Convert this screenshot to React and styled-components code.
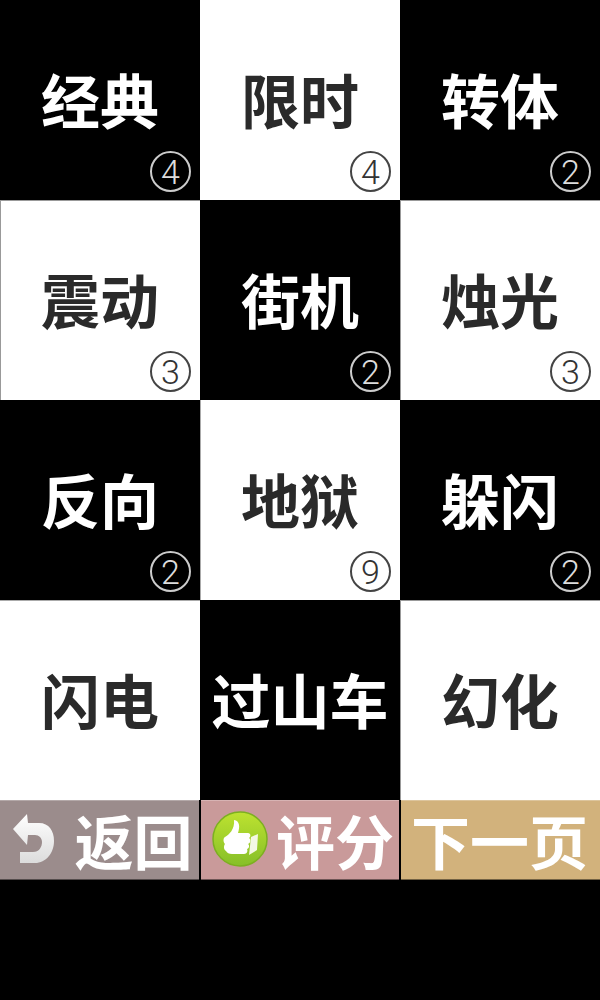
import React from 'react';
import styled, { createGlobalStyle } from 'styled-components';

const GlobalStyle = createGlobalStyle`
    html, body {
        margin: 0;
        padding: 0;
        background: #000;
    }
`;

const Page = styled.div`
    width: 600px;
    height: 1000px;
    background: #000;
    overflow: hidden;
    font-family: "Noto Sans CJK SC", "Liberation Sans", sans-serif;
`;

const Board = styled.div`
    display: grid;
    grid-template-columns: repeat(3, 200px);
    grid-auto-rows: 200px;
`;

const edges = {
    both: 'inset 1px 1px 0 #999',
    top: 'inset 0 1px 0 #aaa',
    left: 'inset 1px 0 0 #aaa',
};

const Tile = styled.div`
    position: relative;
    display: flex;
    align-items: center;
    justify-content: center;
    box-sizing: border-box;
    padding-bottom: 3px;
    background: ${({ $dark }) => ($dark ? '#000' : '#fff')};
    color: ${({ $dark }) => ($dark ? '#fff' : '#2a2a2a')};
    font-size: 59px;
    font-weight: 700;
    line-height: 1;
    white-space: nowrap;
    box-shadow: ${({ $edge }) => edges[$edge] || 'none'};
`;

const Badge = styled.span`
    position: absolute;
    right: 9px;
    bottom: 8px;
    width: 37px;
    height: 37px;
    display: flex;
    align-items: center;
    justify-content: center;
    border: 2px solid ${({ $dark }) => ($dark ? '#ccc' : '#444')};
    border-radius: 50%;
    color: ${({ $dark }) => ($dark ? '#ddd' : '#333')};
    font-family: "Roboto", "Liberation Sans", sans-serif;
    font-size: 34px;
    font-weight: 300;
    line-height: 1;
`;

const Toolbar = styled.div`
    display: grid;
    grid-template-columns: 199px 198px 199px;
    column-gap: 2px;
    height: 80px;
`;

const ToolButton = styled.button`
    display: flex;
    align-items: center;
    justify-content: center;
    gap: ${({ $gap }) => $gap || 0}px;
    box-sizing: border-box;
    height: 80px;
    margin: 0;
    padding: ${({ $pad }) => $pad || '0 0 2px'};
    border: none;
    border-top: 1px solid rgba(255, 255, 255, 0.25);
    border-bottom: 1px solid rgba(0, 0, 0, 0.45);
    background: ${({ $color }) => $color};
    color: #fff;
    font-family: inherit;
    font-size: 59px;
    font-weight: 700;
    line-height: 1;
    white-space: nowrap;
`;

const BackIcon = () => (
    <svg width="42" height="50" viewBox="0 0 42 50">
        <defs>
            <linearGradient id="backFill" x1="0" y1="0" x2="0" y2="1">
                <stop offset="0" stopColor="#fff" />
                <stop offset="1" stopColor="#dcdcdc" />
            </linearGradient>
        </defs>
        <path d="M0 15 L14 0 L15 9 H26 C36 9 41 17 41 27 C41 39 33 49 22 49 H7 V38 H20 C26 38 29 33 29 28 C29 24 26 21 22 21 H15 L14 31 Z" fill="url(#backFill)" />
    </svg>
);

const ThumbIcon = () => (
    <svg width="56" height="56" viewBox="0 0 56 56">
        <defs>
            <linearGradient id="thumbFill" x1="0" y1="0" x2="0" y2="1">
                <stop offset="0" stopColor="#bde230" />
                <stop offset="1" stopColor="#86bf28" />
            </linearGradient>
        </defs>
        <circle cx="28" cy="28" r="27" fill="url(#thumbFill)" stroke="#7cb020" strokeWidth="1.5" />
        <path d="M22 9 C28 10 28 16 26 22 H36 C39 22 39 26 37 27 C39 28 39 32 36 33 C38 34 37 38 35 38 C36 40 35 43 32 43 H20 C17 43 15 42 14 40 C11 38 12 34 13 33 C11 31 11 27 13 26 C17 24 23 18 22 9 Z" fill="#fff" />
        <path d="M39 26 L46 23 L45 39 L37 44 Z" fill="#f4f8e4" />
    </svg>
);

const tiles = [
    { label: '经典', count: '4', dark: true },
    { label: '限时', count: '4' },
    { label: '转体', count: '2', dark: true },
    { label: '震动', count: '3', edge: 'both' },
    { label: '街机', count: '2', dark: true },
    { label: '烛光', count: '3', edge: 'both' },
    { label: '反向', count: '2', dark: true },
    { label: '地狱', count: '9', edge: 'left' },
    { label: '躲闪', count: '2', dark: true },
    { label: '闪电', edge: 'top' },
    { label: '过山车', dark: true },
    { label: '幻化', edge: 'both' },
];

const App = () => (
    <Page>
        <GlobalStyle />
        <Board>
            {tiles.map((t) => (
                <Tile key={t.label} $dark={t.dark} $edge={t.edge}>
                    {t.label}
                    {t.count && <Badge $dark={t.dark}>{t.count}</Badge>}
                </Tile>
            ))}
        </Board>
        <Toolbar>
            <ToolButton $color="#9b8c8c" $gap={19} $pad="0 0 2px 7px">
                <BackIcon />
                返回
            </ToolButton>
            <ToolButton $color="#c99a9a" $gap={8} $pad="0 0 2px 6px">
                <ThumbIcon />
                评分
            </ToolButton>
            <ToolButton $color="#d2b27c" $pad="0 2px 2px 0">下一页</ToolButton>
        </Toolbar>
    </Page>
);

export default App;
